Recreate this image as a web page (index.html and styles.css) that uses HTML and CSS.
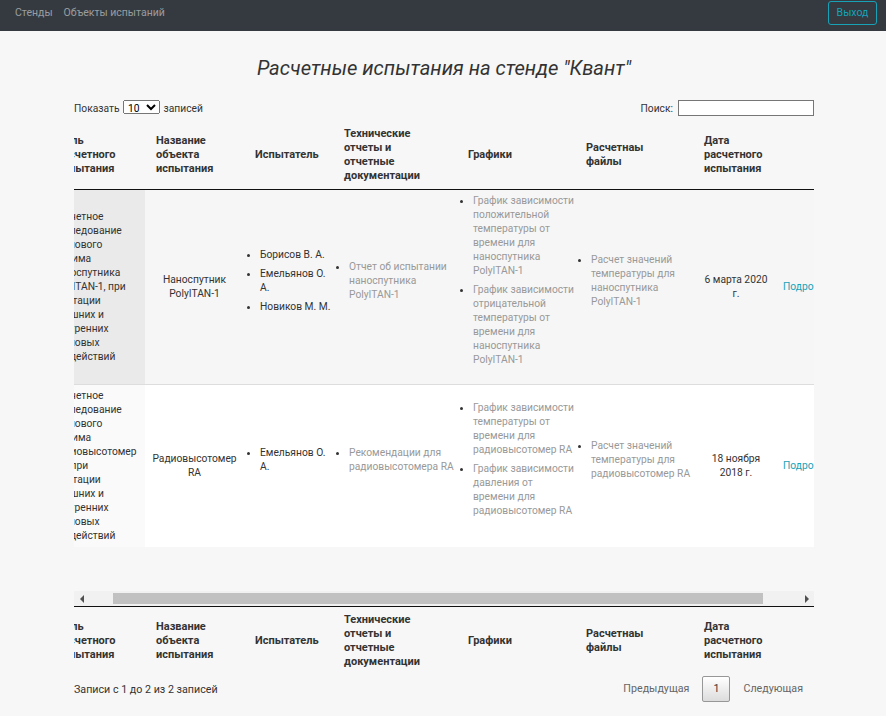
FILE: index.html
```html
<!DOCTYPE html>
<html lang="ru">
<head>
<meta charset="utf-8">
<title>Расчетные испытания</title>
<link rel="stylesheet" href="styles.css">
</head>
<body>
<nav class="navbar">
  <div class="nav-links">
    <a href="#" class="nav-link">Стенды</a>
    <a href="#" class="nav-link">Объекты испытаний</a>
  </div>
  <button class="btn-out" type="button">Выход</button>
</nav>
<main class="container">
  <h2 class="title">Расчетные испытания на стенде "Квант"</h2>
  <div class="dt-top">
    <label class="dt-length">Показать <select class="dt-select"><option>10</option><option>25</option><option>50</option><option>100</option></select> записей</label>
    <label class="dt-filter">Поиск:<input class="dt-input" type="search"></label>
  </div>
  <div class="dt-scroll">
    <div class="clip clip-body">
      <table class="dt">
        <colgroup>
          <col class="c1"><col class="c2"><col class="c3"><col class="c4"><col class="c5"><col class="c6"><col class="c7"><col class="c8">
        </colgroup>
        <thead>
          <tr>
            <th>Цель расчетного испытания</th>
            <th>Название объекта испытания</th>
            <th>Испытатель</th>
            <th>Технические отчеты и отчетные документации</th>
            <th>Графики</th>
            <th>Расчетнаы файлы</th>
            <th>Дата расчетного испытания</th>
            <th></th>
          </tr>
        </thead>
        <tbody>
          <tr class="odd">
            <td class="s1">Расчетное исследование теплового режима наноспутника PolyITAN-1, при имитации внешних и внутренних тепловых воздействий</td>
            <td class="center">Наноспутник PolyITAN-1</td>
            <td><ul class="lst"><li>Борисов В. А.</li><li>Емельянов О. А.</li><li>Новиков М. М.</li></ul></td>
            <td><ul class="lst"><li><a href="#" class="gl">Отчет об испытании наноспутника PolyITAN-1</a></li></ul></td>
            <td><ul class="lst"><li><a href="#" class="gl">График зависимости положительной температуры от времени для наноспутника PolyITAN-1</a></li><li><a href="#" class="gl">График зависимости отрицательной температуры от времени для наноспутника PolyITAN-1</a></li></ul></td>
            <td><ul class="lst"><li><a href="#" class="gl">Расчет значений температуры для наноспутника PolyITAN-1</a></li></ul></td>
            <td class="date">6 марта 2020 г.</td>
            <td><a href="#" class="more">Подробнее</a></td>
          </tr>
          <tr class="even">
            <td class="s1">Расчетное исследование теплового режима радиовысотомер RA, при имитации внешних и внутренних тепловых воздействий</td>
            <td class="center">Радиовысотомер RA</td>
            <td><ul class="lst"><li>Емельянов О. А.</li></ul></td>
            <td><ul class="lst"><li><a href="#" class="gl">Рекомендации для радиовысотомера RA</a></li></ul></td>
            <td><ul class="lst"><li><a href="#" class="gl">График зависимости температуры от времени для радиовысотомер RA</a></li><li><a href="#" class="gl">График зависимости давления от времени для радиовысотомер RA</a></li></ul></td>
            <td><ul class="lst"><li><a href="#" class="gl">Расчет значений температуры для радиовысотомер RA</a></li></ul></td>
            <td class="date">18 ноября 2018 г.</td>
            <td><a href="#" class="more">Подробнее</a></td>
          </tr>
        </tbody>
      </table>
    </div>
    <div class="hscroll">
      <span class="arr arr-left"></span>
      <div class="track"><div class="thumb"></div></div>
      <span class="arr arr-right"></span>
    </div>
    <div class="clip clip-foot">
      <table class="dt">
        <colgroup>
          <col class="c1"><col class="c2"><col class="c3"><col class="c4"><col class="c5"><col class="c6"><col class="c7"><col class="c8">
        </colgroup>
        <tfoot>
          <tr>
            <th>Цель расчетного испытания</th>
            <th>Название объекта испытания</th>
            <th>Испытатель</th>
            <th>Технические отчеты и отчетные документации</th>
            <th>Графики</th>
            <th>Расчетнаы файлы</th>
            <th>Дата расчетного испытания</th>
            <th></th>
          </tr>
        </tfoot>
      </table>
    </div>
  </div>
  <div class="dt-bottom">
    <div class="dt-info">Записи с 1 до 2 из 2 записей</div>
    <div class="dt-paginate">
      <a href="#" class="pbtn">Предыдущая</a><a href="#" class="pbtn cur">1</a><a href="#" class="pbtn">Следующая</a>
    </div>
  </div>
</main>
</body>
</html>
```
FILE: styles.css
```css
html, body {
  margin: 0;
  padding: 0;
}
body {
  background: #f7f7f7;
  font-family: Roboto, "Liberation Sans", Arial, sans-serif;
  font-size: 10.25px;
  line-height: 14px;
  color: #333;
}

.navbar {
  height: 31px;
  box-sizing: border-box;
  background: #343a40;
  display: flex;
  justify-content: space-between;
  align-items: flex-start;
  padding: 1px 9px 0 15px;
}
.nav-links {
  display: flex;
  gap: 11px;
}
.nav-link {
  color: rgba(255, 255, 255, 0.5);
  font-size: 10.5px;
  line-height: 24px;
  text-decoration: none;
}
.btn-out {
  height: 24px;
  box-sizing: border-box;
  width: 49px;
  padding: 0;
  border: 1px solid #17a2b8;
  border-radius: 3px;
  background: transparent;
  color: #17a2b8;
  font-family: Roboto, "Liberation Sans", Arial, sans-serif;
  font-size: 10.5px;
  line-height: 22px;
  text-align: center;
}

.container {
  width: 740px;
  margin-left: 74px;
}
.title {
  margin: 25px 0 0;
  font-size: 20.2px;
  line-height: 24px;
  font-style: italic;
  font-weight: normal;
  text-align: center;
  color: #333;
}

.dt-top {
  display: flex;
  justify-content: space-between;
  align-items: center;
  height: 17px;
  margin-top: 19px;
}
.dt-select {
  font-family: Roboto, "Liberation Sans", Arial, sans-serif;
  font-size: 10.25px;
  width: 37px;
  height: 14px;
  padding: 0;
  margin: 0 1px;
}
.dt-input {
  width: 136px;
  height: 16px;
  box-sizing: border-box;
  margin: 0 0 0 5px;
  padding: 0 2px;
  border: 1px solid #767676;
  background: #fff;
  font-family: Roboto, "Liberation Sans", Arial, sans-serif;
  font-size: 10.25px;
}

.dt-scroll {
  margin-top: 5px;
}
.clip {
  overflow: hidden;
}
.clip-body {
  padding-bottom: 44px;
}
.dt {
  border-collapse: separate;
  border-spacing: 0;
  table-layout: fixed;
  width: 810px;
  margin-left: -25px;
}
.c1 { width: 96px; }
.c2 { width: 99px; }
.c3 { width: 89px; }
.c4 { width: 124px; }
.c5 { width: 118px; }
.c6 { width: 118px; }
.c7 { width: 86px; }
.c8 { width: 80px; }

.dt th {
  padding: 6px 24px 6px 11px;
  text-align: left;
  font-size: 11px;
  font-weight: bold;
  vertical-align: middle;
  color: #333;
}
.dt th:first-child {
  padding-left: 8px;
  padding-right: 20px;
}
.dt thead th {
  border-bottom: 1px solid #111;
}
.dt tfoot th {
  border-top: 1px solid #111;
}
.dt td {
  padding: 4px 0 4px 4px;
  vertical-align: middle;
}
.dt td.s1 {
  padding-right: 12px;
}
.dt tbody tr + tr td {
  border-top: 1px solid #ddd;
}
.odd { background: #f6f6f6; }
.odd .s1 { background: #eaeaea; }
.even { background: #fff; }
.even .s1 { background: #fafafa; }

.dt td.center {
  text-align: center;
  padding: 4px;
}
.dt td.date {
  text-align: center;
  padding: 4px 8px;
}
.lst {
  margin: 0 0 13px;
  padding-left: 12px;
}
.lst li + li {
  margin-top: 5px;
}
.gl {
  color: #999;
  text-decoration: none;
}
.more {
  color: #17a2b8;
  text-decoration: none;
  white-space: nowrap;
}

.hscroll {
  display: flex;
  height: 15px;
  background: #f1f1f1;
}
.arr {
  width: 15px;
  height: 15px;
  display: flex;
  align-items: center;
  justify-content: center;
}
.arr::before {
  content: "";
  width: 0;
  height: 0;
  border-top: 4px solid transparent;
  border-bottom: 4px solid transparent;
}
.arr-left::before {
  border-right: 4px solid #505050;
}
.arr-right::before {
  border-left: 4px solid #505050;
}
.track {
  flex: 1;
  padding: 2px 0;
  box-sizing: border-box;
}
.thumb {
  margin-left: 24px;
  width: 650px;
  height: 11px;
  background: #c1c1c1;
}

.dt-bottom {
  display: flex;
  justify-content: space-between;
  align-items: flex-start;
  font-size: 10.7px;
}
.dt-info {
  padding-top: 8px;
}
.dt-paginate {
  padding-top: 1px;
  display: flex;
}
.pbtn {
  display: block;
  padding: 5px 10px;
  margin-left: 2px;
  border: 1px solid transparent;
  border-radius: 2px;
  color: #666;
  text-decoration: none;
  line-height: 14px;
}
.pbtn.cur {
  border-color: #979797;
  background: linear-gradient(#fff, #dcdcdc);
  color: #333;
}
```
